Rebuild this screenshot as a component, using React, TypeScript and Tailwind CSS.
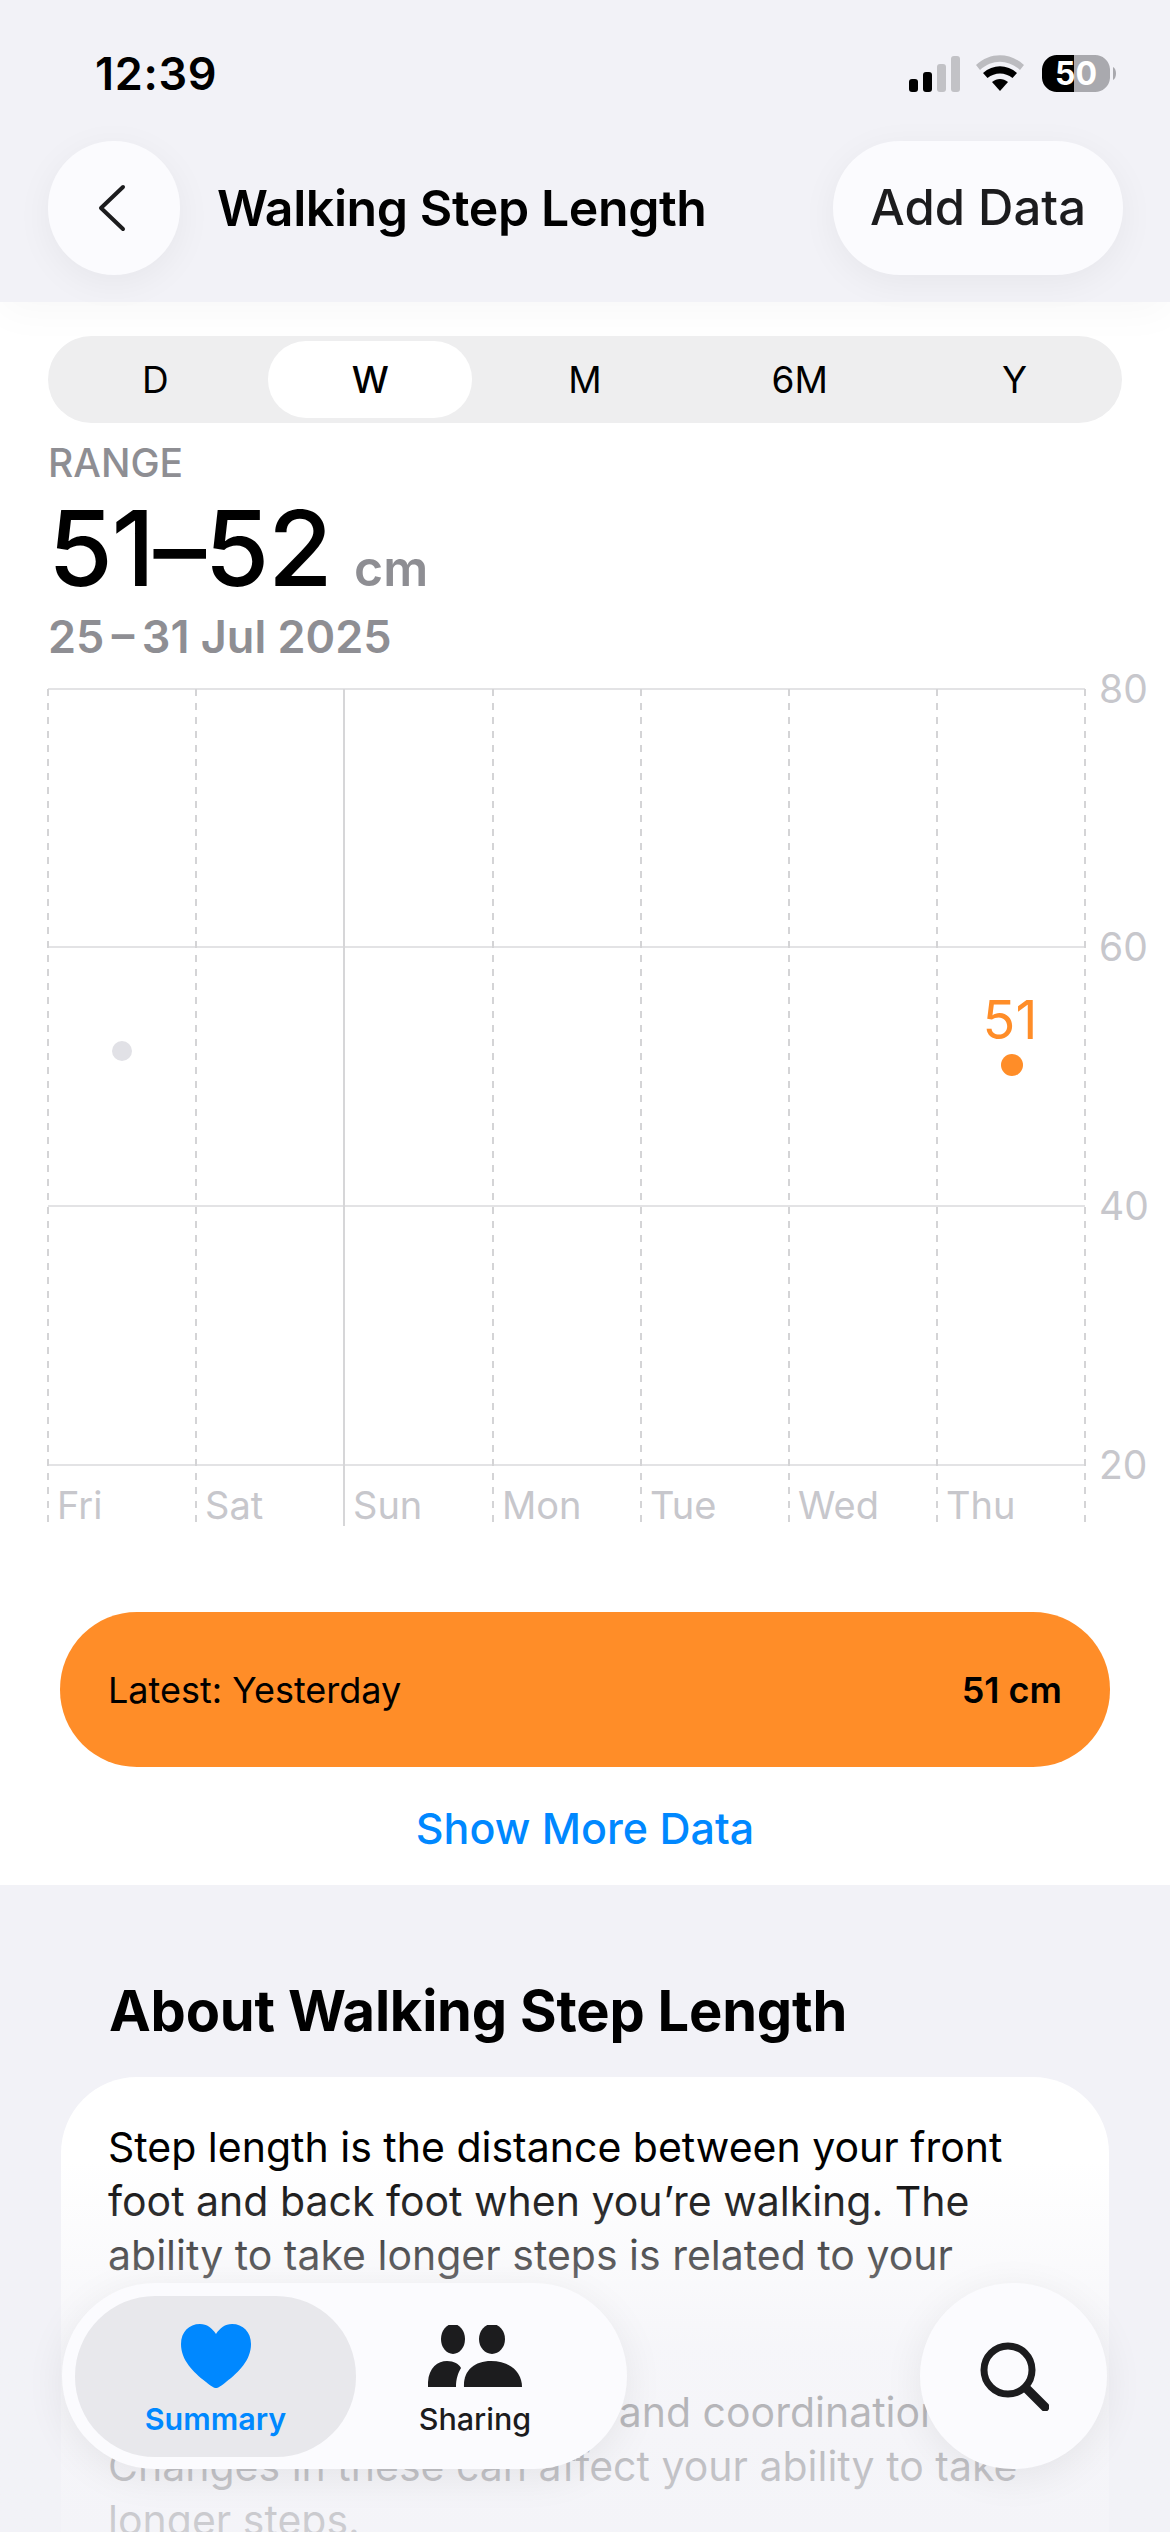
const font = { fontFamily: 'Inter, "Liberation Sans", sans-serif' };

const tabs = ['D', 'W', 'M', '6M', 'Y'];
const days = ['Fri', 'Sat', 'Sun', 'Mon', 'Tue', 'Wed', 'Thu'];
const xs = [48, 196, 344, 493, 641, 789, 937, 1085];
const ys = [
  { y: 688, label: '80' },
  { y: 946, label: '60' },
  { y: 1205, label: '40' },
  { y: 1464, label: '20' },
];
const CHART_TOP = 670;

function StatusIcons() {
  return (
    <svg width="220" height="44" viewBox="0 0 220 44" className="mr-[3px] mt-[5px]">
      <rect x="7" y="27" width="9" height="13" rx="3" fill="#000" />
      <rect x="21" y="20" width="9" height="20" rx="3" fill="#000" />
      <rect x="35" y="12" width="9" height="28" rx="3" fill="#c2c2c6" />
      <rect x="49" y="4" width="9" height="36" rx="3" fill="#c2c2c6" />
      <path d="M74 13 C88 0 108 0 122 13 L118 18 C106 7 90 7 78 18 Z" fill="#bcbcc0" />
      <path d="M81 21 C91 12 105 12 115 21 L110.500 26 C103 20 93 20 85.500 26 Z" fill="#000" />
      <path d="M90 30 C95 26 101 26 106 30 L98 39 Z" fill="#000" />
      <path d="M156 3 H172 V40 H156 A15 15 0 0 1 140 26 V17 A15 15 0 0 1 156 3 Z" fill="#000" />
      <path d="M172 3 H192 A15 15 0 0 1 208 17 V26 A15 15 0 0 1 192 40 H172 Z" fill="#a9a9ae" />
      <path d="M211 15 C215 17 215 26 211 28 Z" fill="#a9a9ae" />
      <text x="174" y="33" textAnchor="middle" fontSize="32" fontWeight="700" fill="#fff" style={font}>50</text>
    </svg>
  );
}

function Chart() {
  return (
    <div className="relative h-[870px]">
      <svg width="1170" height="870" viewBox={`0 ${CHART_TOP} 1170 870`} style={font}>
        {ys.map((l) => (
          <g key={l.label}>
            <line x1="48" x2="1085" y1={l.y} y2={l.y} stroke="#e3e3e5" strokeWidth="2" />
            <text x="1099" y={l.y + 14} fontSize="39" fill="#c7c7cc">{l.label}</text>
          </g>
        ))}
        {xs.map((x, i) =>
          i === 2 ? (
            <line key={x} x1={x} x2={x} y1="688" y2="1525" stroke="#d6d6d8" strokeWidth="2" />
          ) : (
            <line key={x} x1={x} x2={x} y1="688" y2="1525" stroke="#d4d4d6" strokeWidth="2" strokeDasharray="7 7" />
          )
        )}
        {days.map((d, i) => (
          <text key={d} x={xs[i] + 9} y="1518" fontSize="38" fill="#c7c7cc">{d}</text>
        ))}
        <circle cx="122" cy="1050" r="10" fill="#e1e1e6" />
        <text x="1010" y="1038" textAnchor="middle" fontSize="54" fill="#ff8d28">51</text>
        <circle cx="1012" cy="1064" r="11" fill="#ff8d28" />
      </svg>
    </div>
  );
}

function TabBar() {
  return (
    <div className="absolute left-[62px] right-[63px] top-[2283px] flex justify-between">
      <div className="flex h-[186px] w-[565px] items-start rounded-[93px] bg-[#fbfbfe] pl-[13px] pt-[13px] shadow-[0_8px_40px_rgba(0,0,0,0.07)]">
        <div className="flex h-[161px] w-[281px] flex-col items-center rounded-[80px] bg-[#e8e8ec] pt-[28px]">
          <svg width="70" height="64" viewBox="0 0 70 64">
            <path d="M35 64 C33 64 30 62 25 58 C12 48 0 36 0 20 C0 8 8 0 19 0 C26 0 31 4 35 10 C39 4 44 0 51 0 C62 0 70 8 70 20 C70 36 58 48 45 58 C40 62 37 64 35 64 Z" fill="#0088ff" />
          </svg>
          <span className="mt-[12px] text-[30.5px] leading-[38px] font-semibold text-[#0088ff]">Summary</span>
        </div>
        <div className="flex w-[238px] flex-col items-center pt-[29px]">
          <svg width="94" height="62" viewBox="0 0 94 62">
            <ellipse cx="25" cy="14" rx="12" ry="15" fill="#1c1c1e" />
            <ellipse cx="64" cy="14" rx="13" ry="15" fill="#1c1c1e" />
            <path d="M0 62 C-1 44 9 36 19 36 C26 36 31 39 33 43 C30 48 28 54 28 62 Z" fill="#1c1c1e" />
            <path d="M36 62 C35 46 46 36 63 36 C81 36 94 46 94 62 Z" fill="#1c1c1e" />
          </svg>
          <span className="mt-[13px] text-[30.5px] leading-[38px] font-medium text-[#1c1c1e]">Sharing</span>
        </div>
      </div>
      <div className="flex h-[186px] w-[187px] items-center justify-center rounded-full bg-[#fbfbfe] shadow-[0_8px_40px_rgba(0,0,0,0.07)]">
        <svg width="70" height="70" viewBox="0 0 70 70" fill="none" stroke="#1c1c1e" strokeWidth="7" strokeLinecap="round">
          <circle cx="29" cy="29" r="24" />
          <path d="M47 47 L66 66" strokeWidth="9" />
        </svg>
      </div>
    </div>
  );
}

export default function App() {
  return (
    <div className="relative h-[2532px] w-[1170px] overflow-hidden bg-white text-black" style={font}>
      <header className="relative z-10 h-[302px] bg-[#f2f2f7] shadow-[0_10px_40px_rgba(0,0,0,0.03)]">
        <div className="flex h-[141px] items-start justify-between pl-[95px] pr-[45px] pt-[47px]">
          <span className="text-[45px] leading-[54px] font-semibold tracking-[0.7px]">12:39</span>
          <StatusIcons />
        </div>
        <div className="flex items-center pl-[48px] pr-[47px]">
          <button className="flex h-[134px] w-[132px] items-center justify-center rounded-full bg-[#fbfbfe] shadow-[0_8px_36px_rgba(0,0,0,0.05)]">
            <svg width="30" height="48" viewBox="0 0 30 48" fill="none" stroke="#1c1c1e" strokeWidth="4" strokeLinecap="round" strokeLinejoin="round" className="mr-[5px]">
              <path d="M26 3 L4 24 L26 45" />
            </svg>
          </button>
          <h1 className="ml-[37px] text-[50px] leading-[60px] font-semibold tracking-[-0.4px]">Walking Step Length</h1>
          <button className="ml-auto flex h-[134px] w-[290px] items-center justify-center rounded-[67px] bg-[#fbfbfe] text-[49px] font-medium text-[#1c1c1e] shadow-[0_8px_36px_rgba(0,0,0,0.05)]">
            Add Data
          </button>
        </div>
      </header>

      <section className="h-[1583px] bg-white px-[48px] pt-[34px]">
        <div className="flex h-[87px] items-center rounded-[44px] bg-[#eeeeef]">
          {tabs.map((t) => (
            <div key={t} className="flex flex-1 justify-center">
              <div
                className={
                  t === 'W'
                    ? 'flex h-[77px] w-[204px] items-center justify-center rounded-[38px] bg-white text-[37px] font-medium'
                    : 'flex h-[77px] w-[204px] items-center justify-center text-[37px]'
                }
              >
                {t}
              </div>
            </div>
          ))}
        </div>
        <div className="mt-[18px] text-[39px] leading-[44px] font-medium text-[#8e8e93]">RANGE</div>
        <div className="mt-[18px] flex items-baseline leading-[90px]">
          <span className="text-[105px] font-medium tracking-[-1.5px]">51–52</span>
          <span className="ml-[23px] text-[50px] font-semibold text-[#8e8e93]">cm</span>
        </div>
        <div className="mt-[-2px] text-[45px] leading-[52px] font-semibold text-[#8e8e93]">25{'\u2009'}–{'\u2009'}31 Jul 2025</div>
        <div className="mx-[-48px] mt-[8px]">
          <Chart />
        </div>
        <div className="mx-[12px] mt-[71px] flex h-[155px] items-center justify-between rounded-[77px] bg-[#ff8d28] px-[48px] text-[36px]">
          <span>Latest: Yesterday</span>
          <span className="font-semibold">51 cm</span>
        </div>
        <div className="mt-[34px] text-center text-[43px] leading-[54px] font-medium text-[#0088ff]">Show More Data</div>
      </section>

      <section className="h-[647px] bg-[#f2f2f7] px-[61px] pt-[92px]">
        <h2 className="pl-[48px] text-[56px] leading-[68px] font-bold tracking-[-0.2px]">About Walking Step Length</h2>
        <div className="mt-[32px] h-[600px] rounded-[76px] bg-white px-[47px] pt-[43px] text-[41px] leading-[54px]">
          <p>
            Step length is the distance between your front
            <br />
            foot and back foot when you’re walking. The
            <br />
            ability to take longer steps is related to your
            <br />
            lower body strength.
          </p>
          <p className="mt-[49px]">
            Flexibility, speed, balance and coordination.
            <br />
            Changes in these can affect your ability to take
            <br />
            longer steps.
          </p>
        </div>
      </section>

      <div className="absolute inset-x-0 bottom-0 h-[370px] bg-gradient-to-b from-[#f2f2f7]/0 via-[#f2f2f7]/70 to-[#f2f2f7]/85" />
      <TabBar />
    </div>
  );
}
